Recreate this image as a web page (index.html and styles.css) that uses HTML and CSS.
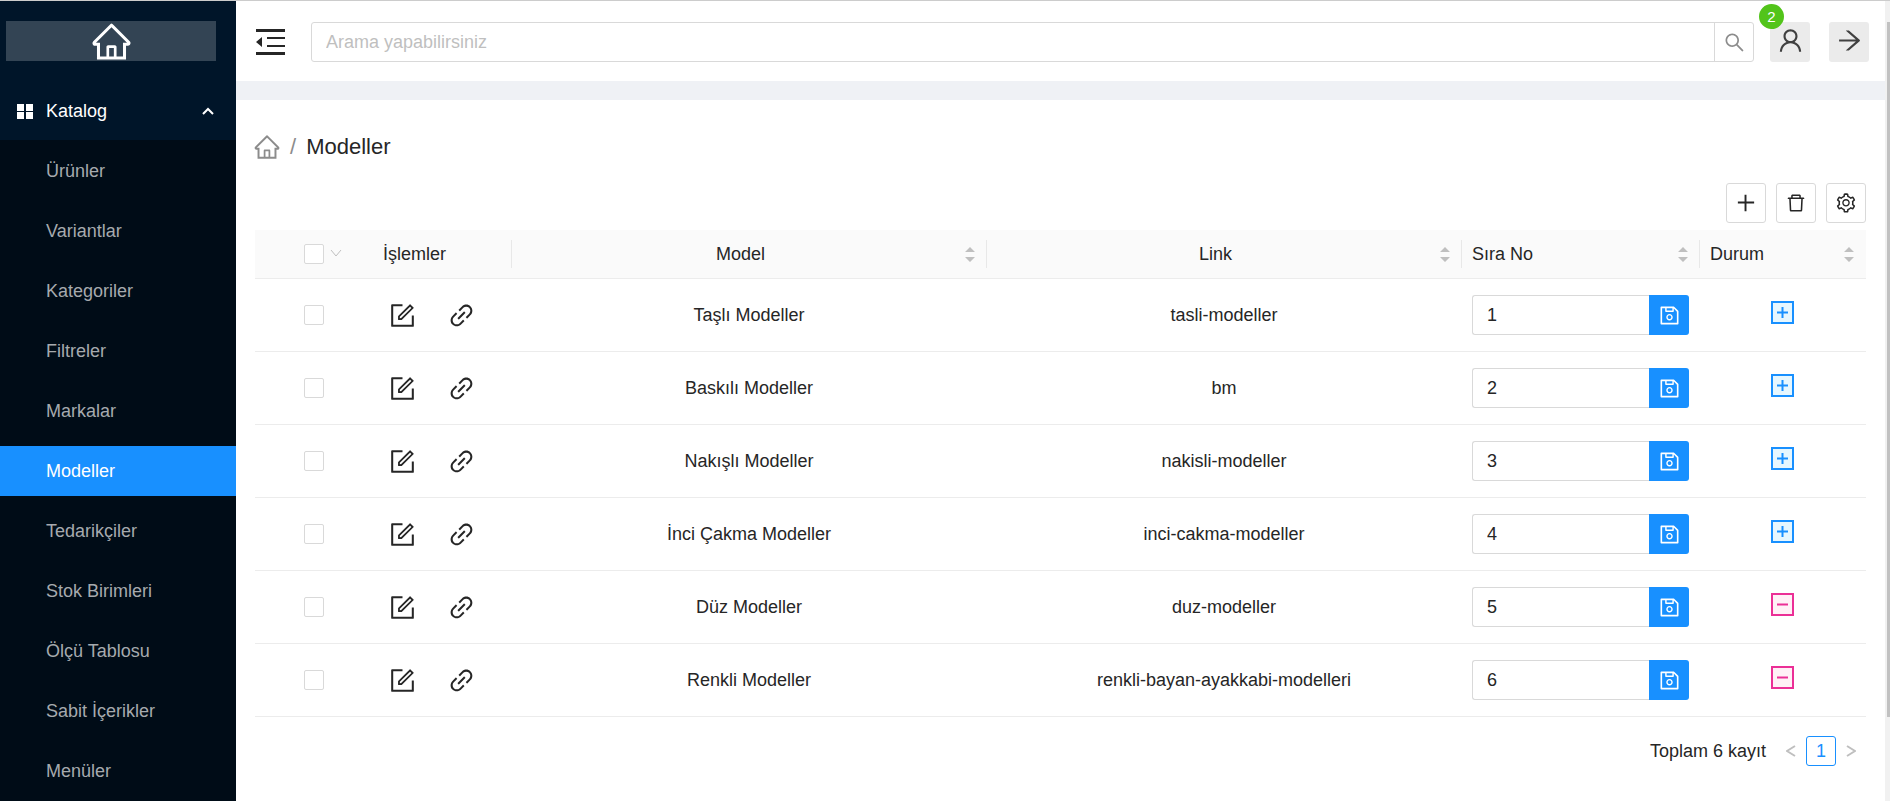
FILE: index.html
```html
<!DOCTYPE html>
<html lang="tr">
<head>
<meta charset="utf-8">
<title>Modeller</title>
<link rel="stylesheet" href="styles.css">
</head>
<body>
<svg class="sprite" aria-hidden="true">
  <symbol id="home" viewBox="0 0 1024 1024"><path d="M946.5 505L560.1 118.8l-25.9-25.9a31.5 31.5 0 0 0-44.4 0L77.5 505a63.9 63.9 0 0 0-18.8 46c.4 35.2 29.7 63.3 64.9 63.3h42.5V940h691.8V614.3h43.4c17.1 0 33.2-6.7 45.3-18.8a63.6 63.6 0 0 0 18.7-45.3c0-17-6.7-33.1-18.8-45.2zM568 868H456V664h112v204zm217.9-325.7V868H632V640c0-22.1-17.9-40-40-40H432c-22.1 0-40 17.9-40 40v228H238.1V542.3h-96l370-369.7 23.1 23.1L882 542.3h-96.1z"/></symbol>
  <symbol id="user" viewBox="0 0 1024 1024"><path d="M858.5 763.6a374 374 0 0 0-80.6-119.5 375.63 375.63 0 0 0-119.5-80.6c-.4-.2-.8-.3-1.2-.5C719.5 518 760 444.7 760 362c0-137-111-248-248-248S264 225 264 362c0 82.7 40.5 156 102.8 201.1-.4.2-.8.3-1.2.5-44.8 18.9-85 46-119.5 80.6a375.63 375.63 0 0 0-80.6 119.5A371.7 371.7 0 0 0 136 901.8a8 8 0 0 0 8 8.2h60c4.4 0 7.9-3.5 8-7.8 2-77.2 33-149.5 87.8-204.3 56.7-56.7 132-87.9 212.2-87.9s155.5 31.2 212.2 87.9C779 752.7 810 825 812 902.2c.1 4.4 3.6 7.8 8 7.8h60a8 8 0 0 0 8-8.2c-1-47.8-10.9-94.3-29.5-138.2zM512 534c-45.9 0-89.1-17.9-121.6-50.4S340 407.9 340 362c0-45.9 17.9-89.1 50.4-121.6S466.1 190 512 190s89.1 17.9 121.6 50.4S684 316.1 684 362c0 45.9-17.9 89.1-50.4 121.6S557.9 534 512 534z"/></symbol>
  <symbol id="search" viewBox="0 0 1024 1024"><path d="M909.6 854.5L649.9 594.8C690.2 542.7 712 479 712 412c0-80.2-31.3-155.4-87.9-212.1-56.6-56.7-132-87.9-212.1-87.9s-155.5 31.3-212.1 87.9C143.2 256.5 112 331.8 112 412c0 80.1 31.3 155.5 87.9 212.1C256.5 680.8 331.8 712 412 712c67 0 130.6-21.8 182.7-62l259.7 259.6a8.2 8.2 0 0 0 11.6 0l43.6-43.5a8.2 8.2 0 0 0 0-11.6zM570.4 570.4C528 612.7 471.8 636 412 636s-116-23.3-158.4-65.6C211.3 528 188 471.8 188 412s23.3-116.1 65.6-158.4C296 211.3 352.2 188 412 188s116.1 23.2 158.4 65.6S636 352.2 636 412s-23.3 116.1-65.6 158.4z"/></symbol>
  <symbol id="arrow" viewBox="0 0 1024 1024"><path d="M869 487.8L491.2 159.9c-2.9-2.5-6.6-3.9-10.5-3.9h-88.5c-7.4 0-10.8 9.2-5.2 14l350.2 304H152c-4.4 0-8 3.6-8 8v60c0 4.4 3.6 8 8 8h585.1L386.9 854c-5.6 4.9-2.2 14 5.2 14h91.5c1.9 0 3.8-.7 5.2-2L869 536.2a32.07 32.07 0 0 0 0-48.4z"/></symbol>
  <symbol id="trash" viewBox="0 0 1024 1024"><path d="M360 184h304v72h72v-80c0-35.3-28.7-64-64-64H352c-35.3 0-64 28.7-64 64v80h72v-72zm504 72H160c-17.7 0-32 14.3-32 32v32c0 4.4 3.6 8 8 8h60.4l24.7 523c1.6 34.1 29.8 61 63.9 61h454c34.2 0 62.3-26.8 63.9-61l24.7-523H888c4.4 0 8-3.6 8-8v-32c0-17.7-14.3-32-32-32zM731.3 840H292.7l-24.2-512h487l-24.2 512z"/></symbol>
  <symbol id="gear" viewBox="0 0 1024 1024"><path d="M924.8 625.7l-65.5-56c3.1-19 4.7-38.4 4.7-57.8s-1.6-38.8-4.7-57.8l65.5-56a32.03 32.03 0 0 0 9.3-35.2l-.9-2.6a443.74 443.74 0 0 0-79.7-137.9l-1.8-2.1a32.12 32.12 0 0 0-35.1-9.5l-81.3 28.9c-30-24.6-63.5-44-99.7-57.6l-15.7-85a32.05 32.05 0 0 0-25.8-25.7l-2.7-.5c-52.1-9.4-106.9-9.4-159 0l-2.7.5a32.05 32.05 0 0 0-25.8 25.7l-15.8 85.4a351.86 351.86 0 0 0-99 57.4l-81.9-29.1a32 32 0 0 0-35.1 9.5l-1.8 2.1a446.02 446.02 0 0 0-79.7 137.9l-.9 2.6c-4.5 12.5-.8 26.5 9.3 35.2l66.3 56.6c-3.1 18.8-4.6 38-4.6 57.1 0 19.2 1.5 38.4 4.6 57.1L99 625.5a32.03 32.03 0 0 0-9.3 35.2l.9 2.6c18.1 50.4 44.9 96.9 79.7 137.9l1.8 2.1a32.12 32.12 0 0 0 35.1 9.5l81.9-29.1c29.8 24.5 63.1 43.9 99 57.4l15.8 85.4a32.05 32.05 0 0 0 25.8 25.7l2.7.5a449.4 449.4 0 0 0 159 0l2.7-.5a32.05 32.05 0 0 0 25.8-25.7l15.7-85a350 350 0 0 0 99.7-57.6l81.3 28.9a32 32 0 0 0 35.1-9.5l1.8-2.1c34.8-41.1 61.6-87.5 79.7-137.9l.9-2.6c4.5-12.3.8-26.3-9.3-35zM788.3 465.9c2.5 15.1 3.8 30.6 3.8 46.1s-1.3 31-3.8 46.1l-6.6 40.1 74.7 63.9a370.03 370.03 0 0 1-42.6 73.6L721 702.8l-31.4 25.8c-23.9 19.6-50.5 35-79.3 45.8l-38.1 14.3-17.9 97a377.5 377.5 0 0 1-85 0l-17.9-97.2-37.8-14.5c-28.5-10.8-55-26.2-78.7-45.7l-31.4-25.9-93.4 33.2c-17-22.9-31.2-47.6-42.6-73.6l75.5-64.5-6.5-40c-2.4-14.9-3.7-30.3-3.7-45.5 0-15.3 1.2-30.6 3.7-45.5l6.5-40-75.5-64.5c11.3-26.1 25.6-50.7 42.6-73.6l93.4 33.2 31.4-25.9c23.7-19.5 50.2-34.9 78.7-45.7l37.9-14.3 17.9-97.2c28.1-3.2 56.8-3.2 85 0l17.9 97 38.1 14.3c28.7 10.8 55.4 26.2 79.3 45.8l31.4 25.8 92.8-32.9c17 22.9 31.2 47.6 42.6 73.6L781.8 426l6.5 39.9zM512 326c-97.2 0-176 78.8-176 176s78.8 176 176 176 176-78.8 176-176-78.8-176-176-176zm79.2 255.2A111.6 111.6 0 0 1 512 614c-29.9 0-58-11.7-79.2-32.8A111.6 111.6 0 0 1 400 502c0-29.9 11.7-58 32.8-79.2C454 401.6 482.1 390 512 390c29.9 0 58 11.6 79.2 32.8A111.6 111.6 0 0 1 624 502c0 29.9-11.7 58-32.8 79.2z"/></symbol>
  <symbol id="edit" viewBox="0 0 1024 1024"><path d="M904 512h-56c-4.4 0-8 3.6-8 8v320H184V184h320c4.4 0 8-3.6 8-8v-56c0-4.4-3.6-8-8-8H144c-17.7 0-32 14.3-32 32v736c0 17.7 14.3 32 32 32h736c17.7 0 32-14.3 32-32V520c0-4.4-3.6-8-8-8z"/><path d="M355.9 534.9L354 653.8c-.1 8.9 7.1 16.2 16 16.2h.4l118-2.9c2-.1 4-.9 5.4-2.3l415.9-415c3.1-3.1 3.1-8.2 0-11.3L785.4 114.3c-1.6-1.6-3.6-2.3-5.7-2.3s-4.1.8-5.7 2.3l-415.8 415a8.3 8.3 0 0 0-2.3 5.6zm63.5 23.6L779.7 199l45.2 45.1-360.5 359.7-45.7 1.1.7-46.4z"/></symbol>
  <symbol id="link" viewBox="0 0 1024 1024"><path d="M574 665.4a8.03 8.03 0 0 0-11.3 0L446.5 781.6c-53.8 53.8-144.6 59.5-204 0-59.5-59.5-53.8-150.2 0-204l116.2-116.2c3.1-3.1 3.1-8.2 0-11.3l-39.8-39.8a8.03 8.03 0 0 0-11.3 0L191.4 526.5c-84.6 84.6-84.6 221.5 0 306s221.5 84.6 306 0l116.2-116.2c3.1-3.1 3.1-8.2 0-11.3L574 665.4zm258.6-474c-84.6-84.6-221.5-84.6-306 0L410.3 307.6a8.03 8.03 0 0 0 0 11.3l39.7 39.7c3.1 3.1 8.2 3.1 11.3 0l116.2-116.2c53.8-53.8 144.6-59.5 204 0 59.5 59.5 53.8 150.2 0 204L665.3 562.6a8.03 8.03 0 0 0 0 11.3l39.8 39.8c3.1 3.1 8.2 3.1 11.3 0l116.2-116.2c84.5-84.6 84.5-221.5 0-306.1zM610.1 372.3a8.03 8.03 0 0 0-11.3 0L372.3 598.7a8.03 8.03 0 0 0 0 11.3l39.6 39.6c3.1 3.1 8.2 3.1 11.3 0l226.4-226.4c3.1-3.1 3.1-8.2 0-11.3l-39.5-39.6z"/></symbol>
  <symbol id="save" viewBox="0 0 1024 1024"><path d="M893.3 293.3L730.7 130.7c-7.5-7.5-16.7-13-26.7-16V112H144c-17.7 0-32 14.3-32 32v736c0 17.7 14.3 32 32 32h736c17.7 0 32-14.3 32-32V338.5c0-17-6.7-33.2-18.7-45.2zM384 184h256v104H384V184zm456 656H184V184h136v136c0 17.7 14.3 32 32 32h320c17.7 0 32-14.3 32-32V205.8l136 136V840zM512 442c-79.5 0-144 64.5-144 144s64.5 144 144 144 144-64.5 144-144-64.5-144-144-144zm0 224c-44.2 0-80-35.8-80-80s35.8-80 80-80 80 35.8 80 80-35.8 80-80 80z"/></symbol>
  <symbol id="sort" viewBox="0 0 10 15"><path d="M5 0L10 5H0zM0 10H10L5 15z"/></symbol>
  <symbol id="plus-box" viewBox="0 0 23 23"><rect x="1" y="1" width="21" height="21" fill="#e6f7ff" stroke="#1890ff" stroke-width="2"/><path d="M6 11.500H17M11.500 6V17" stroke="#1890ff" stroke-width="2"/></symbol>
  <symbol id="minus-box" viewBox="0 0 23 23"><rect x="1" y="1" width="21" height="21" fill="#fff0f6" stroke="#eb2f96" stroke-width="2"/><path d="M6 11.500H17" stroke="#eb2f96" stroke-width="2"/></symbol>
</svg>

<div class="app">
  <aside class="sidebar">
    <a class="logo" href="#" aria-label="Ana sayfa"><svg><use href="#home"/></svg></a>
    <nav class="menu">
      <button class="menu-title" type="button" aria-expanded="true">
        <svg class="grid-icon" viewBox="0 0 16 15"><path d="M0 0h7v7H0zM9 0h7v7H9zM0 8h7v7H0zM9 8h7v7H9z"/></svg>
        <span>Katalog</span>
        <svg class="chevron" viewBox="0 0 12 8"><path d="M1 7l5-5 5 5"/></svg>
      </button>
      <ul class="submenu">
        <li><a href="#">Ürünler</a></li>
        <li><a href="#">Variantlar</a></li>
        <li><a href="#">Kategoriler</a></li>
        <li><a href="#">Filtreler</a></li>
        <li><a href="#">Markalar</a></li>
        <li><a class="active" href="#" aria-current="page">Modeller</a></li>
        <li><a href="#">Tedarikçiler</a></li>
        <li><a href="#">Stok Birimleri</a></li>
        <li><a href="#">Ölçü Tablosu</a></li>
        <li><a href="#">Sabit İçerikler</a></li>
        <li><a href="#">Menüler</a></li>
      </ul>
    </nav>
  </aside>

  <div class="main">
    <header class="topbar">
      <button class="fold" type="button" aria-label="Menüyü daralt"><svg viewBox="0 0 29 26"><path d="M0 0h29v3H0zM11 8h18v2H11zM11 16h18v2H11zM0 23h29v3H0zM0 13l6-5v10z"/></svg></button>
      <form class="search">
        <input type="text" placeholder="Arama yapabilirsiniz" aria-label="Arama">
        <button type="button" aria-label="Ara"><svg><use href="#search"/></svg></button>
      </form>
      <button class="square" type="button" aria-label="Kullanıcı"><svg><use href="#user"/></svg><span class="badge">2</span></button>
      <button class="square" type="button" aria-label="Çıkış"><svg><use href="#arrow"/></svg></button>
    </header>

    <main class="content">
      <div class="breadcrumb">
        <a href="#" aria-label="Ana sayfa"><svg><use href="#home"/></svg></a>
        <span class="slash">/</span>
        <h1>Modeller</h1>
      </div>
      <div class="toolbar">
        <button type="button" aria-label="Ekle"><svg viewBox="0 0 23 23"><path d="M3 10h17v2H3zM10 3h2v17h-2z"/></svg></button>
        <button type="button" aria-label="Sil"><svg><use href="#trash"/></svg></button>
        <button type="button" aria-label="Ayarlar"><svg><use href="#gear"/></svg></button>
      </div>

      <table>
        <colgroup><col class="c-check"><col class="c-ops"><col><col><col class="c-order"><col class="c-state"></colgroup>
        <thead>
          <tr>
            <th class="check"><div class="check-all"><input type="checkbox" aria-label="Tümünü seç"><svg viewBox="0 0 12 9"><path d="M1 1l5 6 5-6"/></svg></div></th>
            <th class="split">İşlemler</th>
            <th class="split"><div class="sortable mid"><span>Model</span><svg><use href="#sort"/></svg></div></th>
            <th class="split"><div class="sortable mid"><span>Link</span><svg><use href="#sort"/></svg></div></th>
            <th class="split"><div class="sortable"><span>Sıra No</span><svg><use href="#sort"/></svg></div></th>
            <th><div class="sortable"><span>Durum</span><svg><use href="#sort"/></svg></div></th>
          </tr>
        </thead>
        <tbody>
          <tr>
            <td class="check"><input type="checkbox" aria-label="Taşlı Modeller seç"></td>
            <td><div class="ops"><button type="button" aria-label="Düzenle"><svg><use href="#edit"/></svg></button><button type="button" aria-label="Bağlantı"><svg><use href="#link"/></svg></button></div></td>
            <td class="mid">Taşlı Modeller</td><td class="mid">tasli-modeller</td>
            <td><div class="order"><input type="text" value="1" aria-label="Sıra no"><button type="button" aria-label="Kaydet"><svg><use href="#save"/></svg></button></div></td>
            <td><button class="state" type="button" aria-label="Aktif"><svg><use href="#plus-box"/></svg></button></td>
          </tr>
          <tr>
            <td class="check"><input type="checkbox" aria-label="Baskılı Modeller seç"></td>
            <td><div class="ops"><button type="button" aria-label="Düzenle"><svg><use href="#edit"/></svg></button><button type="button" aria-label="Bağlantı"><svg><use href="#link"/></svg></button></div></td>
            <td class="mid">Baskılı Modeller</td><td class="mid">bm</td>
            <td><div class="order"><input type="text" value="2" aria-label="Sıra no"><button type="button" aria-label="Kaydet"><svg><use href="#save"/></svg></button></div></td>
            <td><button class="state" type="button" aria-label="Aktif"><svg><use href="#plus-box"/></svg></button></td>
          </tr>
          <tr>
            <td class="check"><input type="checkbox" aria-label="Nakışlı Modeller seç"></td>
            <td><div class="ops"><button type="button" aria-label="Düzenle"><svg><use href="#edit"/></svg></button><button type="button" aria-label="Bağlantı"><svg><use href="#link"/></svg></button></div></td>
            <td class="mid">Nakışlı Modeller</td><td class="mid">nakisli-modeller</td>
            <td><div class="order"><input type="text" value="3" aria-label="Sıra no"><button type="button" aria-label="Kaydet"><svg><use href="#save"/></svg></button></div></td>
            <td><button class="state" type="button" aria-label="Aktif"><svg><use href="#plus-box"/></svg></button></td>
          </tr>
          <tr>
            <td class="check"><input type="checkbox" aria-label="İnci Çakma Modeller seç"></td>
            <td><div class="ops"><button type="button" aria-label="Düzenle"><svg><use href="#edit"/></svg></button><button type="button" aria-label="Bağlantı"><svg><use href="#link"/></svg></button></div></td>
            <td class="mid">İnci Çakma Modeller</td><td class="mid">inci-cakma-modeller</td>
            <td><div class="order"><input type="text" value="4" aria-label="Sıra no"><button type="button" aria-label="Kaydet"><svg><use href="#save"/></svg></button></div></td>
            <td><button class="state" type="button" aria-label="Aktif"><svg><use href="#plus-box"/></svg></button></td>
          </tr>
          <tr>
            <td class="check"><input type="checkbox" aria-label="Düz Modeller seç"></td>
            <td><div class="ops"><button type="button" aria-label="Düzenle"><svg><use href="#edit"/></svg></button><button type="button" aria-label="Bağlantı"><svg><use href="#link"/></svg></button></div></td>
            <td class="mid">Düz Modeller</td><td class="mid">duz-modeller</td>
            <td><div class="order"><input type="text" value="5" aria-label="Sıra no"><button type="button" aria-label="Kaydet"><svg><use href="#save"/></svg></button></div></td>
            <td><button class="state" type="button" aria-label="Pasif"><svg><use href="#minus-box"/></svg></button></td>
          </tr>
          <tr>
            <td class="check"><input type="checkbox" aria-label="Renkli Modeller seç"></td>
            <td><div class="ops"><button type="button" aria-label="Düzenle"><svg><use href="#edit"/></svg></button><button type="button" aria-label="Bağlantı"><svg><use href="#link"/></svg></button></div></td>
            <td class="mid">Renkli Modeller</td><td class="mid">renkli-bayan-ayakkabi-modelleri</td>
            <td><div class="order"><input type="text" value="6" aria-label="Sıra no"><button type="button" aria-label="Kaydet"><svg><use href="#save"/></svg></button></div></td>
            <td><button class="state" type="button" aria-label="Pasif"><svg><use href="#minus-box"/></svg></button></td>
          </tr>
        </tbody>
      </table>

      <div class="pager">
        <span>Toplam 6 kayıt</span>
        <button class="step" type="button" aria-label="Önceki"><svg viewBox="0 0 10 12"><path d="M9 1L1 6l8 5"/></svg></button>
        <button class="page" type="button">1</button>
        <button class="step" type="button" aria-label="Sonraki"><svg viewBox="0 0 10 12"><path d="M1 1l8 5-8 5"/></svg></button>
      </div>
    </main>
  </div>
  <div class="scroll-track"><div class="scroll-thumb"></div></div>
</div>
</body>
</html>
```
FILE: styles.css
```css
* { box-sizing: border-box; }

body {
  margin: 0;
  font-family: "Liberation Sans", Arial, sans-serif;
  font-size: 18px;
  line-height: 28px;
  color: #262626;
  background: #fff;
}

button, input {
  margin: 0;
  padding: 0;
  border: 0;
  background: none;
  font: inherit;
  color: inherit;
}

a { color: inherit; text-decoration: none; }
svg { display: block; fill: currentColor; }
.sprite { position: absolute; width: 0; height: 0; }

.app {
  display: flex;
  height: 100vh;
  overflow: hidden;
  border-top: 1px solid #ccc;
}

/* Sidebar */
.sidebar {
  flex: 0 0 236px;
  background: #001529;
  color: #fff;
}

.logo {
  display: flex;
  align-items: center;
  justify-content: center;
  height: 40px;
  margin: 20px 20px 25px 6px;
  background: #334454;
}
.logo svg { width: 43px; height: 43px; }

.menu-title {
  display: flex;
  align-items: center;
  width: 100%;
  height: 50px;
  padding: 0 22px 0 17px;
}
.menu-title span { flex: 1; margin-left: 13px; text-align: left; }
.grid-icon { width: 16px; height: 15px; }
.chevron { width: 12px; height: 8px; fill: none; stroke: #fff; stroke-width: 2; }

.submenu {
  display: flex;
  flex-direction: column;
  gap: 10px;
  margin: 4px 0 0;
  padding: 6px 0 5px;
  list-style: none;
  background: #000c17;
  color: #a6aaae;
}
.submenu a { display: block; padding: 11px 46px; }
.submenu .active { background: #1890ff; color: #fff; }

/* Main area */
.main {
  flex: 1;
  min-width: 0;
  display: flex;
  flex-direction: column;
}

.topbar {
  display: flex;
  align-items: center;
  height: 99px;
  padding: 2px 16px 0 20px;
  border-bottom: 19px solid #eff1f5;
}
.fold svg { width: 29px; height: 26px; }

.search {
  flex: 1;
  display: flex;
  height: 40px;
  margin: 0 16px 0 26px;
  border: 1px solid #d9d9d9;
  border-radius: 3px;
}
.search input { flex: 1; min-width: 0; padding: 0 14px; outline: 0; }
.search input::placeholder { color: #bfbfbf; }
.search button {
  display: flex;
  align-items: center;
  justify-content: center;
  width: 39px;
  border-left: 1px solid #d9d9d9;
  color: #8c8c8c;
}
.search svg { width: 23px; height: 23px; }

.square {
  position: relative;
  display: flex;
  align-items: center;
  justify-content: center;
  width: 40px;
  height: 40px;
  padding-bottom: 4px;
  border-radius: 3px;
  background: #ebebeb;
  color: #404040;
}
.square + .square { margin-left: 19px; }
.square svg { width: 29px; height: 29px; }
.badge {
  position: absolute;
  top: -18px;
  left: -11px;
  width: 25px;
  border-radius: 13px;
  background: #52c41a;
  color: #fff;
  font-size: 15px;
  line-height: 25px;
}

.content { padding: 28px 19px 20px; }

.breadcrumb { display: flex; align-items: center; height: 38px; font-size: 22px; color: #8c8c8c; }
.breadcrumb svg { width: 28px; height: 28px; margin-left: -2px; }
.slash { margin: 0 10px 0 9px; }
h1 { margin: 0; font-size: 22px; font-weight: 400; color: #262626; }

.toolbar {
  display: flex;
  justify-content: flex-end;
  gap: 10px;
  margin: 17px 0 7px;
}
.toolbar button {
  display: flex;
  align-items: center;
  justify-content: center;
  width: 40px;
  height: 40px;
  border: 1px solid #d9d9d9;
  border-radius: 3px;
}
.toolbar svg { width: 22px; height: 22px; }

/* Table */
table { width: 100%; border-collapse: separate; border-spacing: 0; table-layout: fixed; }
.c-check { width: 118px; }
.c-ops { width: 139px; }
.c-order { width: 238px; }
.c-state { width: 166px; }

th, td { padding: 0 11px 0 10px; border-bottom: 1px solid #ececec; text-align: left; font-weight: 400; }
th {
  height: 49px;
  background-color: #fafafa;
}
th.split {
  background-image: linear-gradient(#e8e8e8, #e8e8e8);
  background-repeat: no-repeat;
  background-position: right center;
  background-size: 1px 28px;
}
td { height: 73px; }
td.mid { text-align: center; }

input[type="checkbox"] {
  appearance: none;
  display: block;
  width: 20px;
  height: 20px;
  margin: 0 auto;
  border: 1px solid #d9d9d9;
  border-radius: 2px;
  background: #fff;
}
.check-all { position: relative; }
.check-all svg {
  position: absolute;
  top: 5px;
  left: 65px;
  width: 12px;
  height: 9px;
  fill: none;
  stroke: #bfbfbf;
}

.sortable { display: flex; align-items: center; gap: 6px; }
.sortable span { flex: 1; }
.sortable.mid span { text-align: center; }
.sortable svg { width: 10px; height: 15px; margin-right: 1px; color: #bfbfbf; }

.ops { display: flex; gap: 30px; padding-left: 5px; }
.ops svg { width: 29px; height: 29px; }

.order { display: flex; }
.order input {
  flex: 1;
  min-width: 0;
  height: 40px;
  padding: 0 14px;
  border: 1px solid #d9d9d9;
  border-right: 0;
  border-radius: 3px 0 0 3px;
}
.order button {
  display: flex;
  align-items: center;
  justify-content: center;
  width: 40px;
  border-radius: 0 3px 3px 0;
  background: #1890ff;
  color: #fff;
}
.order svg { width: 23px; height: 23px; }

.state { display: block; margin: 0 auto; padding-bottom: 5px; }
.state svg { width: 23px; height: 23px; }

/* Pagination */
.pager { display: flex; align-items: center; justify-content: flex-end; margin-top: 19px; }
.step { width: 30px; padding: 0 10px; }
.pager span { margin-right: 10px; }
.step svg { width: 10px; height: 12px; fill: none; stroke: #bfbfbf; stroke-width: 2; }
.page {
  width: 30px;
  height: 30px;
  border: 1px solid #1890ff;
  border-radius: 3px;
  color: #1890ff;
  line-height: 28px;
}

.scroll-track { flex: 0 0 5px; padding: 21px 0 84px 2px; background: #f1f1f1; }
.scroll-thumb { height: 100%; background: #c1c1c1; }
```
